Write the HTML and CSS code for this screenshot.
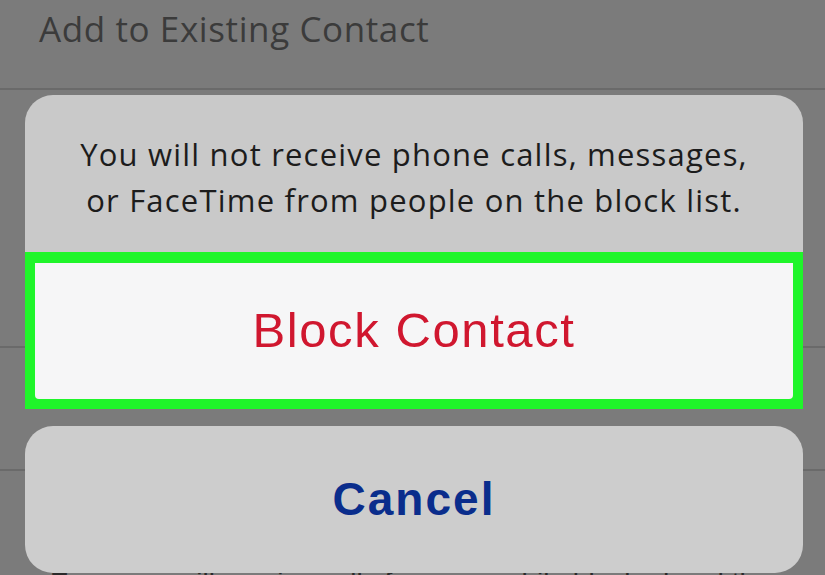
FILE: index.html
```html
<!DOCTYPE html>
<html>
<head>
<meta charset="utf-8">
<link rel="stylesheet" href="styles.css">
</head>
<body>
<div class="screen">
  <div class="list">
    <div class="row row-top"><span class="row-label">Add to Existing Contact</span></div>
    <div class="row row-mid"></div>
    <div class="row row-low"></div>
    <div class="row-foot">Everyone will receive calls from you while blocked and the contact will</div>
  </div>
  <div class="sheet">
    <div class="alert">
      <div class="message">You will not receive phone calls, messages,<br>or FaceTime from people on the block list.</div>
      <div class="highlight">
        <div class="action destructive">Block Contact</div>
      </div>
    </div>
    <div class="cancel">Cancel</div>
  </div>
</div>
</body>
</html>
```
FILE: styles.css
```css
html, body {
  margin: 0;
  padding: 0;
}
body {
  width: 825px;
  height: 575px;
  overflow: hidden;
  background: #7b7b7b;
  font-family: "Liberation Sans", Arial, sans-serif;
}
.screen {
  position: relative;
  width: 825px;
  height: 575px;
  overflow: hidden;
}
.list {
  display: flex;
  flex-direction: column;
}
.row {
  border-bottom: 2px solid #6a6a6a;
  box-sizing: border-box;
}
.row-top {
  height: 90px;
  padding: 5px 0 0 39px;
}
.row-label {
  font-family: "Open Sans", "Liberation Sans", sans-serif;
  font-size: 35px;
  color: #3b3b3b;
  letter-spacing: 0.6px;
}
.row-mid {
  height: 258px;
}
.row-low {
  height: 123px;
}
.row-foot {
  padding: 96px 0 0 50px;
  font-size: 28px;
  color: #2a2a2a;
  white-space: nowrap;
}
.sheet {
  position: absolute;
  left: 25px;
  top: 95px;
  width: 778px;
  display: flex;
  flex-direction: column;
  gap: 17px;
}
.alert {
  background: #c9c9c9;
  border-radius: 28px 28px 0 0;
  display: flex;
  flex-direction: column;
}
.message {
  height: 157px;
  box-sizing: border-box;
  padding-top: 36px;
  text-align: center;
  font-family: "Open Sans", "Liberation Sans", sans-serif;
  font-size: 31px;
  line-height: 46px;
  color: #1c1c1c;
  letter-spacing: 1.2px;
}
.highlight {
  border: 10px solid #1ff52a;
  border-top-width: 11px;
  background: #1ff52a;
}
.action {
  height: 136px;
  background: #f6f6f7;
  border-radius: 0 0 4px 4px;
  display: flex;
  align-items: center;
  justify-content: center;
}
.destructive {
  color: #d0172f;
  font-size: 49px;
  letter-spacing: 1.6px;
  padding-bottom: 2px;
  box-sizing: border-box;
}
.cancel {
  height: 147px;
  background: #cdcdcd;
  border-radius: 28px;
  display: flex;
  align-items: center;
  justify-content: center;
  color: #0a2d8c;
  font-weight: bold;
  font-size: 46px;
  letter-spacing: 2px;
  padding-bottom: 2px;
  box-sizing: border-box;
}
```
